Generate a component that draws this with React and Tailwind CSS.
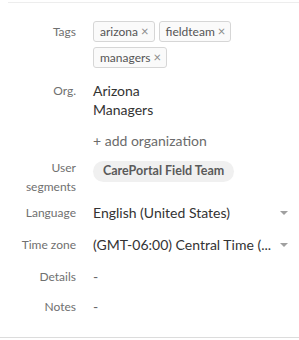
import React from 'react';

function Tag({ label }) {
  return (
    <span className="inline-flex h-[21px] items-center gap-[3px] rounded-[3px] border border-[#d6d6d6] bg-[#fafafa] pl-[6px] pr-[5px] text-[12px] text-[#555]">
      {label}
      <span className="text-[13px] leading-none text-[#8a8a8a]">×</span>
    </span>
  );
}

function Caret() {
  return (
    <svg width="8" height="4" viewBox="0 0 8 4" className="shrink-0">
      <path d="M0 0h8L4 4z" fill="#a0a0a0" />
    </svg>
  );
}

function Row({ label, children, className = '', labelClass = 'leading-[20px]' }) {
  return (
    <div className={`flex ${className}`}>
      <div className={`w-[76px] shrink-0 text-right text-[12px] text-[#707070] ${labelClass}`}>{label}</div>
      <div className="ml-[17px] min-w-0 flex-1">{children}</div>
    </div>
  );
}

export default function App() {
  const tags = ['arizona', 'fieldteam', 'managers'];
  return (
    <div className="h-[340px] w-[299px] bg-white font-['Lato',sans-serif]">
      <div className="h-[2px]" />
      <div className="ml-[8px] h-px bg-[#ededed]" />
      <div className="flex h-[335px] flex-col border-b border-[#dcdcdc] pr-[11px] pt-[18px]">
        <Row label="Tags" labelClass="leading-[21px]">
          <div className="flex flex-wrap gap-x-[4px] gap-y-[5px]">
            {tags.map(t => <Tag key={t} label={t} />)}
          </div>
        </Row>
        <Row label="Org." className="mt-[13px]" labelClass="leading-[19px]">
          <div className="text-[14px] leading-[19px] text-[#333]">
            <div>Arizona</div>
            <div>Managers</div>
          </div>
          <div className="mt-[12px] text-[14px] leading-[19px] text-[#6b6b6b]">+ add organization</div>
        </Row>
        <Row label={<>User<br />segments</>} className="mt-[7px]" labelClass="pt-[1px] leading-[19px]">
          <span className="inline-flex h-[21px] items-center rounded-full bg-[#f0f0f0] px-[10px] text-[12.5px] font-bold text-[#5a5a5a]">
            CarePortal Field Team
          </span>
        </Row>
        <Row label="Language" className="mt-[7px]">
          <div className="flex items-center justify-between text-[14px] leading-[20px] text-[#333]">
            <span>English (United States)</span>
            <Caret />
          </div>
        </Row>
        <Row label="Time zone" className="mt-[12px]">
          <div className="flex items-center justify-between text-[14px] leading-[20px] text-[#333]">
            <span className="whitespace-nowrap">(GMT-06:00) Central Time (...</span>
            <span className="ml-[6px]"><Caret /></span>
          </div>
        </Row>
        <Row label="Details" className="mt-[12px]">
          <div className="text-[14px] leading-[20px] text-[#666]">-</div>
        </Row>
        <Row label="Notes" className="mt-[10px]">
          <div className="text-[14px] leading-[20px] text-[#666]">-</div>
        </Row>
      </div>
    </div>
  );
}
